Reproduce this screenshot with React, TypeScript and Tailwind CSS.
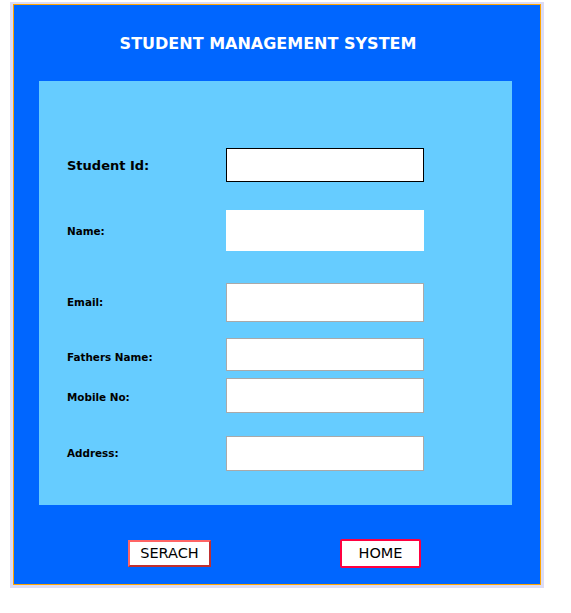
import React from 'react';

const rows = [
  { label: 'Student Id:', big: true, mt: 'mt-0', h: 'h-[34px]', box: 'border-black', lp: 'pt-[2px]' },
  { label: 'Name:', big: false, mt: 'mt-[28px]', h: 'h-[41px]', box: 'border-white', lp: 'pt-[3px]' },
  { label: 'Email:', big: false, mt: 'mt-[32px]', h: 'h-[39px]', box: 'border-[#a9a9a9]', lp: 'pt-[1px]' },
  { label: 'Fathers Name:', big: false, mt: 'mt-[16px]', h: 'h-[33px]', box: 'border-[#a9a9a9]', lp: 'pt-[6px]' },
  { label: 'Mobile No:', big: false, mt: 'mt-[7px]', h: 'h-[35px]', box: 'border-[#a9a9a9]', lp: 'pt-[5px]' },
  { label: 'Address:', big: false, mt: 'mt-[23px]', h: 'h-[35px]', box: 'border-[#a9a9a9]', lp: 'pt-[1px]' },
];

export default function App() {
  return (
    <div className="min-h-screen bg-white pt-[2px] pl-[10px]" style={{ fontFamily: '"DejaVu Sans", Verdana, sans-serif' }}>
      <div className="w-[534px] bg-[#dcdcf5] pt-[2px] px-[3px] pb-[3px]">
        <div className="border border-[#ffa500] bg-[#0066ff]">
          <div className="h-[76px] flex items-center justify-center pr-[18px] pt-[1px]">
            <h1 className="text-white font-bold text-[16px]">STUDENT MANAGEMENT SYSTEM</h1>
          </div>

          <div className="ml-[25px] w-[473px] bg-[#66ccff] pt-[67px] pb-[34px] pl-[28px]">
            {rows.map((r) => (
              <div key={r.label} className={`flex items-center ${r.mt}`}>
                <div
                  className={`w-[159px] font-bold text-black ${r.lp} ${r.big ? 'text-[13px]' : 'text-[10.4px]'}`}
                >
                  {r.label}
                </div>
                <input className={`w-[198px] ${r.h} bg-white border ${r.box} outline-none`} />
              </div>
            ))}
          </div>

          <div className="h-[79px] flex items-start pt-[35px] pl-[114px]">
            <button className="w-[83px] h-[27px] bg-white border-2 border-[#ff6464] border-r-[#c03030] border-b-[#c03030] text-[14.5px] text-black leading-none">
              SERACH
            </button>
            <button className="ml-[129px] -mt-[1px] w-[81px] h-[29px] bg-white border-2 border-[#ff0040] rounded-[2px] text-[14.5px] text-black leading-none">
              HOME
            </button>
          </div>
        </div>
      </div>
    </div>
  );
}
